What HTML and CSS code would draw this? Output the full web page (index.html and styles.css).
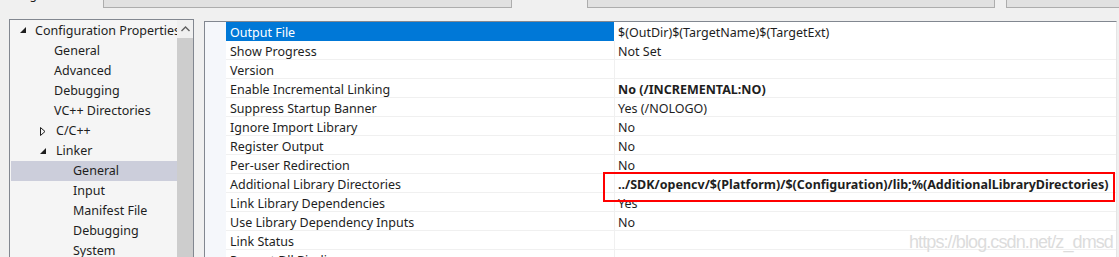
FILE: index.html
```html
<!DOCTYPE html>
<html>
<head>
<meta charset="utf-8">
<link rel="stylesheet" href="styles.css">
</head>
<body>
<div class="topstrip">
  <div class="tlabel">Configuration:</div>
  <div class="tbox b1"></div>
  <div class="tbox b2"></div>
  <div class="tbox b3"><span class="tbtext">Configuration Manager...</span></div>
</div>
<div class="main">
  <div class="treepanel">
    <div class="tree">
      <div class="node l0"><svg class="arr" width="6" height="6" viewBox="0 0 6 6"><polygon points="6,0 6,6 0,6" fill="#1e1e1e"/></svg><span>Configuration Properties</span></div>
      <div class="node l1">General</div>
      <div class="node l1">Advanced</div>
      <div class="node l1">Debugging</div>
      <div class="node l1">VC++ Directories</div>
      <div class="node l0b"><svg class="arr2" width="6" height="9" viewBox="0 0 6 9"><polygon points="0.5,0.5 5,4.5 0.5,8.5" fill="none" stroke="#1e1e1e" stroke-width="1"/></svg><span>C/C++</span></div>
      <div class="node l0b"><svg class="arr2" width="6" height="6" viewBox="0 0 6 6"><polygon points="6,0 6,6 0,6" fill="#1e1e1e"/></svg><span>Linker</span></div>
      <div class="node l2 sel">General</div>
      <div class="node l2">Input</div>
      <div class="node l2">Manifest File</div>
      <div class="node l2">Debugging</div>
      <div class="node l2">System</div>
    </div>
    <div class="vscroll">
      <div class="sarrow"><svg width="9" height="6" viewBox="0 0 9 6"><polyline points="0.5,5 4.5,1 8.5,5" fill="none" stroke="#606060" stroke-width="1.4"/></svg></div>
      <div class="thumb"></div>
    </div>
  </div>
  <div class="gridpanel">
    <div class="margin"></div>
    <div class="rows">
      <div class="row selrow"><div class="lab">Output File</div><div class="val">$(OutDir)$(TargetName)$(TargetExt)</div></div>
      <div class="row"><div class="lab">Show Progress</div><div class="val">Not Set</div></div>
      <div class="row"><div class="lab">Version</div><div class="val"></div></div>
      <div class="row"><div class="lab">Enable Incremental Linking</div><div class="val bold">No (/INCREMENTAL:NO)</div></div>
      <div class="row"><div class="lab">Suppress Startup Banner</div><div class="val">Yes (/NOLOGO)</div></div>
      <div class="row"><div class="lab">Ignore Import Library</div><div class="val">No</div></div>
      <div class="row"><div class="lab">Register Output</div><div class="val">No</div></div>
      <div class="row"><div class="lab">Per-user Redirection</div><div class="val">No</div></div>
      <div class="row"><div class="lab">Additional Library Directories</div><div class="val bold">../SDK/opencv/$(Platform)/$(Configuration)/lib;%(AdditionalLibraryDirectories)</div></div>
      <div class="row"><div class="lab">Link Library Dependencies</div><div class="val">Yes</div></div>
      <div class="row"><div class="lab">Use Library Dependency Inputs</div><div class="val">No</div></div>
      <div class="row"><div class="lab">Link Status</div><div class="val"></div></div>
      <div class="row"><div class="lab">Prevent Dll Binding</div><div class="val"></div></div>
    </div>
    <div class="redbox"></div>
    <div class="watermark">https://blog.csdn.net/z_dmsd</div>
  </div>
</div>
</body>
</html>
```
FILE: styles.css
```css
html, body {
  margin: 0;
  padding: 0;
  background: #f0f0f0;
  overflow: hidden;
}
body {
  width: 1119px;
  height: 257px;
  font-family: "Noto Sans", "Liberation Sans", sans-serif;
  font-size: 12.5px;
  color: #1e1e1e;
}
.topstrip {
  position: relative;
  height: 8px;
  display: flex;
  overflow: hidden;
}
.tlabel {
  position: absolute;
  left: 0;
  top: -13px;
  line-height: 16px;
  font-size: 12px;
}
.tbox {
  position: absolute;
  top: -20px;
  height: 26px;
  border: 1px solid #adadad;
  background: #e1e1e1;
}
.b1 { left: 103px; width: 407px; }
.b2 { left: 587px; width: 406px; }
.b3 { left: 1006px; width: 140px; }
.tbtext {
  position: absolute;
  left: -26px;
  top: 4px;
  font-size: 12px;
  line-height: 16px;
  white-space: nowrap;
}
.main {
  display: flex;
  padding-left: 9px;
}
.treepanel {
  margin-top: 11px;
  width: 183px;
  height: 260px;
  border: 1px solid #828790;
  background: #f5f5f5;
  display: flex;
}
.tree {
  width: 167px;
  padding-top: 1px;
  overflow: hidden;
}
.node {
  height: 20px;
  line-height: 20px;
  white-space: nowrap;
  display: flex;
  align-items: center;
}
.node svg { flex-shrink: 0; }
.node span { line-height: 20px; flex-shrink: 0; }
.l0 { padding-left: 10px; }
.l0 .arr { margin-right: 9px; margin-top: -2px; }
.l1 { padding-left: 44px; }
.l0b { padding-left: 30px; }
.l0b .arr2 { margin-right: 10px; }
.l2 { padding-left: 63px; }
.sel {
  background: #cccedb;
  margin-left: 1px;
  padding-left: 62px;
}
.vscroll {
  width: 16px;
  background: #f0f0f0;
  display: flex;
  flex-direction: column;
}
.sarrow {
  height: 18px;
  display: flex;
  justify-content: center;
  align-items: center;
}
.thumb {
  flex: 1;
  background: #cdcdcd;
}
.gridpanel {
  position: relative;
  margin-top: 13px;
  margin-left: 10px;
  width: 911px;
  height: 260px;
  border: 1px solid #828790;
  border-right: 1px solid #e5e5e5;
  background: #ffffff;
  display: flex;
}
.margin {
  width: 21px;
  background: #f5f7fb;
}
.rows {
  flex: 1;
}
.row {
  display: flex;
  height: 18px;
  border-bottom: 1px solid #f0f0f0;
  white-space: nowrap;
}
.lab, .val {
  line-height: 18px;
  padding-top: 2px;
  height: 16px;
}
.lab {
  width: 384px;
  padding-left: 4px;
  border-right: 1px solid #f0f0f0;
  overflow: hidden;
}
.val {
  flex: 1;
  padding-left: 3px;
}
.bold { font-weight: bold; }
.selrow {
  height: 19px;
  border-bottom: 0;
}
.selrow .lab {
  height: 17px;
  background: #0078d7;
  color: #ffffff;
  border-right-color: #ffffff;
}
.redbox {
  position: absolute;
  left: 398px;
  top: 150px;
  width: 508px;
  height: 26px;
  border: 2px solid #ff0000;
}
.watermark {
  position: absolute;
  left: 704px;
  top: 210px;
  font-family: "Liberation Sans", Arial, sans-serif;
  font-size: 18px;
  letter-spacing: -0.9px;
  color: #dcdcdc;
  white-space: nowrap;
}
```
